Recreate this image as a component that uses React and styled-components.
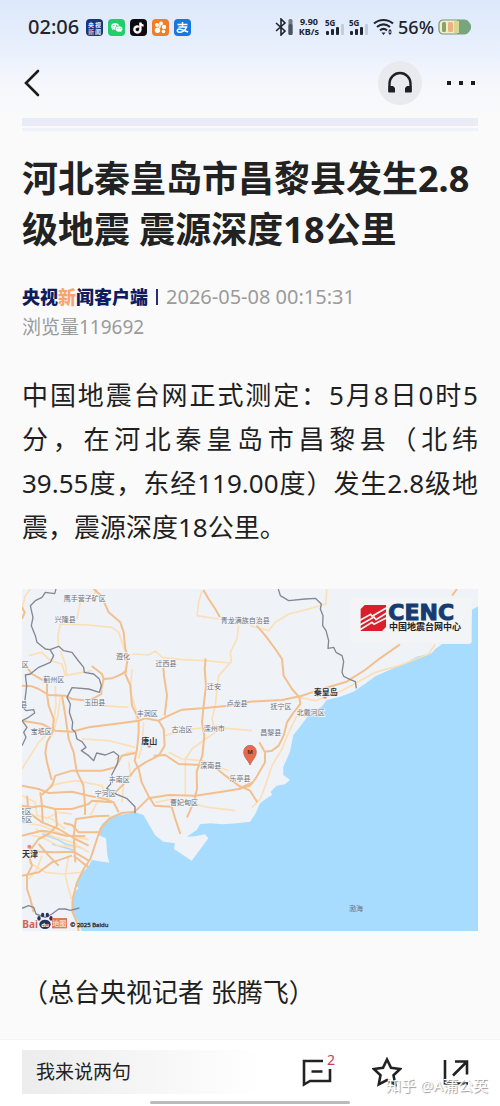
import React from "react";
import styled, { createGlobalStyle } from "styled-components";

const GlobalStyle = createGlobalStyle`
  * {
    box-sizing: border-box;
  }
  body {
    margin: 0;
    background: #fafafa;
    color: #1f1f1f;
    font-family: "Noto Sans", "Noto Sans CJK SC", sans-serif;
  }
  h1, p {
    margin: 0;
  }
  button {
    border: 0;
    padding: 0;
    background: none;
    color: inherit;
    font: inherit;
  }
  svg {
    display: block;
  }
`;

const Page = styled.div`
  display: flex;
  flex-direction: column;
  min-height: 100vh;
  background: linear-gradient(#dce8fa 0, #e9f0fd 50px, #f7f8fc 90px, #fafafa 120px);
`;

const StatusBar = styled.div`
  display: flex;
  align-items: center;
  justify-content: space-between;
  height: 54px;
  padding: 0 28px;
  color: #20242c;
`;

const StatusGroup = styled.div`
  display: flex;
  align-items: center;
  gap: ${(props) => (props.$tight ? "4px" : "5px")};
`;

const Clock = styled.time`
  margin-right: 2px;
  font-size: 20px;
  line-height: 20px;
  font-weight: 500;
`;

const AppIcon = styled.svg`
  width: 17px;
  height: 17px;
  border-radius: 4px;
  background: ${(props) => props.$bg};
`;

const NetSpeed = styled.div`
  margin: 0 2px;
  font-size: 9px;
  line-height: 10px;
  font-weight: 700;
  text-align: center;
`;

const Percent = styled.span`
  font-size: 18px;
  line-height: 20px;
  font-weight: 500;
`;

const NavBar = styled.nav`
  display: flex;
  align-items: center;
  justify-content: space-between;
  height: 58px;
  padding: 0 22px;
`;

const NavActions = styled.div`
  display: flex;
  align-items: center;
  gap: 22px;
`;

const RoundButton = styled.button`
  display: grid;
  place-items: center;
  width: 44px;
  height: 44px;
  border-radius: 50%;
  background: #e8eaed;
`;

const Article = styled.main`
  flex: 1;
  padding: 6px 22px 23px;
`;

const Stripe = styled.div`
  height: ${(props) => (props.$thin ? "3px" : "8px")};
  margin-bottom: 2px;
  background: ${(props) => (props.$thin ? "#f0f2fa" : "#e9ecf6")};
`;

const Title = styled.h1`
  margin-top: 22px;
  font-size: 36px;
  line-height: 51px;
  font-weight: 700;
  color: #222;
`;

const Meta = styled.div`
  display: flex;
  flex-wrap: wrap;
  align-items: center;
  margin-top: 27px;
  color: #9b9b9b;
  line-height: 30px;
`;

const Source = styled.span`
  padding-right: 8px;
  font-size: 18px;
  font-weight: 900;
  color: #101b62;
  em {
    color: #f3a673;
    font-style: normal;
  }
`;

const Published = styled.time`
  display: flex;
  align-items: center;
  gap: 8px;
  font-size: 20px;
  &::before {
    content: "";
    width: 2px;
    height: 16px;
    background: #26306f;
  }
`;

const Views = styled.span`
  flex-basis: 100%;
  font-size: 19px;
`;

const Paragraph = styled.p`
  margin-top: ${(props) => props.$top};
  font-size: 26px;
  line-height: 44px;
  text-align: justify;
`;

const MapFigure = styled.figure`
  margin: 40px 0 0;
  svg {
    width: 100%;
    height: auto;
  }
`;

const Footer = styled.footer`
  position: relative;
  padding: 10px 0 2px;
  border-top: 1px solid #f3f3f3;
  background: #fff;
`;

const FooterRow = styled.div`
  display: flex;
  align-items: center;
  gap: 40px;
  padding: 0 28px 0 22px;
`;

const CommentInput = styled.input`
  flex: 1;
  min-width: 0;
  height: 44px;
  padding: 0 14px;
  border: 0;
  border-radius: 0;
  outline: 0;
  background: linear-gradient(90deg, #ececec, #fff);
  font-family: inherit;
  font-size: 19px;
  &::placeholder {
    color: #222;
    opacity: 1;
  }
`;

const ToolButton = styled.button`
  position: relative;
  width: 30px;
  height: 30px;
`;

const Badge = styled.span`
  position: absolute;
  top: -5px;
  right: -3px;
  color: #c8375f;
  font-size: 14px;
  line-height: 16px;
`;

const HomeIndicator = styled.div`
  width: 200px;
  height: 3px;
  margin: 7px auto 0;
  border-radius: 2px;
  background: #bbb;
`;

const Watermark = styled.span`
  position: absolute;
  right: 12px;
  bottom: 10px;
  color: #fff;
  font-size: 15px;
  line-height: 22px;
  text-shadow: 1px 1px 1px #999;
  pointer-events: none;
`;

const MapLabel = styled.text`
  fill: ${(props) => (props.$city ? "#333" : "#6d7079")};
  font-size: ${(props) => (props.$city ? "24px" : "21px")};
  font-weight: ${(props) => (props.$city ? 700 : 400)};
  text-anchor: middle;
  dominant-baseline: central;
  paint-order: stroke;
  stroke: #f4f6f9;
  stroke-width: ${(props) => (props.$sea ? 0 : "4px")};
`;

const coast =
  "M0 0H1368V52L1350 62L1345 165H1260L1240 180L1229 193L1184 203L1150 222L1114 238L1060 262L1024 288L994 308L954 323L914 333L899 353L864 373L834 413L814 438L804 488L784 533V558L804 573L789 586L764 590L746 608L750 618L734 628L714 643L700 675L684 698L644 703L604 706L564 703L534 706L524 723L494 743L520 742L549 736L559 748L509 815L456 780L459 763L424 758L399 738L380 705L364 678L339 670L269 683L240 705L229 738L252 748L256 798L262 821L209 813L199 833L174 858L162 890L170 898L159 908L149 938V968L169 998L179 1026H0Z";

const borders = [
  "M102 0L98 14L70 10L60 25L40 35L25 50L33 85L28 110L40 140L45 160L70 180L84 182L110 172L125 185L150 190L165 210L185 235L187 250L215 255L232 270L238 290L232 310L200 300L150 296L135 325L145 345L142 370L152 400L150 420L160 430L165 450L180 458L192 475L178 485L200 500L215 515L224 492L250 498L275 488L290 500L286 525L269 558L266 585L254 598L284 616L314 628L339 653V673",
  "M84 182L95 200L85 220L50 235L25 255L10 258L14 290L8 340L0 350",
  "M0 352L12 365L35 362L38 372L20 385L0 395L15 415L5 430L12 445L0 470",
  "M769 0L775 20L800 35L850 30L880 28L898 45L895 60L903 80L902 110L912 125L920 155L918 178L935 175L942 190L960 200L965 218L960 250L965 262L985 272L1000 278L1003 298",
  "M0 958L20 950L35 955L42 975L70 985L90 975L110 960L130 960L145 964L172 957",
];

const minorRoads = [
  "M109 170L108 140L115 105L200 108L270 115L290 130L310 190",
  "M330 195L380 198L400 186L420 205L480 212L550 215L625 222",
  "M540 5L530 40L525 80L590 90",
  "M650 110L645 150L625 190L628 218L590 260L585 300L580 350L570 390L580 430L550 450L510 480L490 510V615",
  "M684 110L740 125L760 100L800 75L860 60L912 45L914 0",
  "M830 345L825 380L800 430L780 480L750 530L730 590L715 630L690 655",
  "M832 325L880 335L960 305L1060 250L1130 230L1220 195L1240 165",
  "M20 200L60 190L85 215L120 225L130 260L180 250L210 245",
  "M115 185L130 225L135 260",
  "M100 290L102 350L95 400",
  "M115 325L108 380L95 425",
  "M225 0L210 30L175 40L165 90",
  "M195 335L240 350L320 355",
  "M180 450L260 455L340 475",
  "M430 440L500 420L580 415L690 425",
  "M440 490L480 510L540 515L620 545",
  "M0 540L50 460L80 430",
  "M400 640L450 630L560 655L640 665",
  "M330 240L325 310L345 370L342 400",
  "M365 400L360 470L350 510",
  "M280 510L320 490L345 490",
  "M320 520L325 555L305 580L300 640",
  "M260 640L240 590L160 575L80 590",
  "M205 680L225 640L280 620",
  "M0 620L40 640L45 680L90 690L130 720",
  "M70 690L110 670L150 675",
  "M0 700L60 710L120 735L200 752",
  "M40 720L100 745L150 760L200 790",
  "M30 740L60 745L110 770L170 775",
  "M140 800L130 860L148 930",
  "M20 820L70 850L120 855L180 850",
  "M60 800L45 840L20 870",
  "M0 60L10 20L25 0",
];

const majorRoads = [
  "M215 0L238 20L260 70L295 100L305 130L310 180L318 205L312 240L310 255L325 290L330 350L350 390",
  "M209 231L240 255L245 270L270 268L300 255L312 245",
  "M245 270L238 300L238 315L220 325L200 335L150 330L130 320L80 318L50 300L30 292L0 290",
  "M15 235L30 255L60 272L80 268",
  "M0 395L60 405L100 425L150 428L200 415L300 402L350 395L370 388L410 395L440 380L480 362L540 358L620 350L684 338L780 333L834 322L900 300L974 278L1029 243L1074 208L1134 166",
  "M424 233L426 260L435 320L428 380",
  "M551 208L548 240L552 290L545 350L540 400L547 440L541 500L524 548L525 600L515 640L495 685",
  "M350 395L350 430L345 480L338 515L350 540L359 580L379 620L398 650L449 653L460 690L475 735",
  "M410 395L425 420L428 470L410 500L370 520L340 540L310 580L280 610",
  "M75 280L75 315L80 350L95 390L92 430L75 460L70 490L75 520L89 573",
  "M120 320L130 380L140 450L155 490L164 548L184 588L189 648V678",
  "M0 590L50 600L80 612L150 608L200 620L250 630L275 640L290 670",
  "M59 618L90 590L100 560L150 545L240 545L280 535L300 500L340 492",
  "M339 668L379 628L440 618L520 620L600 608L650 600L690 580",
  "M395 500L430 498L470 525L540 528L580 535L610 560L650 590L684 605L706 640",
  "M339 668L300 672L262 688L235 720L225 750L205 810L185 840L165 880L152 930V970L165 1000L170 1026",
  "M160 820L155 740L162 690L220 682L262 680",
  "M155 800L180 820L200 835",
  "M0 650L30 655L60 650L100 660L150 660L200 645L210 635L270 640",
  "M15 620L20 670L60 700L110 720L160 750L200 770",
  "M55 610L60 650L62 700",
  "M100 660L105 710L80 735L50 750L20 790",
  "M125 702L150 708L170 730L240 730",
  "M0 740L20 735L60 725L90 730L130 740L190 742",
  "M0 788H60L100 790L155 788L200 815",
  "M50 765L80 800L110 830",
  "M20 800L30 830L15 860L15 900L25 930L35 970",
  "M0 860L50 850L90 820L150 800",
  "M704 110L730 140L760 180L780 210L785 260L810 300L832 325",
  "M832 325L835 345L815 370L795 400L785 440L770 470L750 485L728 488L712 460",
  "M729 490V520L700 570L684 590L650 600",
  "M544 3L560 30L580 60L594 85",
  "M0 90L8 70L0 55",
  "M1290 20L1305 0",
];

const labels = [
  ["鹰手营子矿区", 188, 27],
  ["兴隆县", 130, 90],
  ["青龙满族自治县", 670, 95],
  ["遵化", 303, 201],
  ["迁西县", 432, 223],
  ["蓟州区", 95, 270],
  ["迁安", 576, 293],
  ["玉田县", 218, 340],
  ["卢龙县", 645, 344],
  ["丰润区", 376, 372],
  ["抚宁区", 777, 352],
  ["北戴河区", 866, 371],
  ["宝坻区", 58, 427],
  ["古冶区", 480, 421],
  ["滦州市", 577, 417],
  ["昌黎县", 746, 430],
  ["滦南县", 566, 530],
  ["丰南区", 292, 572],
  ["宁河区", 250, 613],
  ["乐亭县", 654, 568],
  ["曹妃甸区", 486, 641],
  ["区", 10, 225],
  ["县", 5, 346],
  ["辰区", 8, 666],
  ["桥区", 10, 692],
  ["秦皇岛", 911, 306, true],
  ["唐山", 382, 453, true],
  ["天津", 24, 793, true],
];

function SignalIcon() {
  return (
    <svg width="20" height="20" viewBox="0 0 20 20" aria-hidden="true">
      <text x="0" y="9" fontSize="8" fontWeight="700" fill="#20242c">
        5G
      </text>
      <g fill="#20242c">
        <rect x="1" y="14" width="3" height="4" rx="1" />
        <rect x="6" y="12" width="3" height="6" rx="1" />
        <rect x="11" y="10" width="3" height="8" rx="1" />
        <rect x="16" y="7" width="3" height="11" rx="1" fill="#c4cddb" />
      </g>
    </svg>
  );
}

function Status() {
  return (
    <StatusBar>
      <StatusGroup>
        <Clock>02:06</Clock>
        <AppIcon $bg="#18347c" viewBox="0 0 17 17">
          <g fontSize="6" fontWeight="700" fill="#e6edff">
            <text x="2" y="8">央</text>
            <text x="9" y="8">视</text>
            <text x="2" y="15" fill="#efb8a0">新</text>
            <text x="9" y="15">闻</text>
          </g>
        </AppIcon>
        <AppIcon $bg="#1fcf6c" viewBox="0 0 17 17">
          <path d="M7.2 4C4.800 4 3 5.500 3 7.400c0 1 .6 2 1.500 2.600L4.200 11.300l1.600-.8 1.400.2C7 8 9 6.400 11.300 6.500 10.800 5 9.200 4 7.200 4Z" fill="#e9fff1" />
          <path d="M11 7.200c-2 0-3.500 1.200-3.500 2.800s1.500 2.800 3.500 2.800l1.200-.2 1.300.7-.3-1.200c.8-.5 1.300-1.300 1.300-2.100 0-1.600-1.500-2.800-3.500-2.800Z" fill="#fff" />
          <g fill="#1fcf6c">
            <circle cx="5.800" cy="6.500" r=".6" />
            <circle cx="8.500" cy="6.500" r=".6" />
            <circle cx="9.900" cy="9.300" r=".5" />
            <circle cx="12.200" cy="9.300" r=".5" />
          </g>
        </AppIcon>
        <AppIcon $bg="#0c0a10" viewBox="0 0 17 17" fill="none" strokeWidth="2">
          <path d="M8.300 7.500a3 3 0 1 0 1.800 2.700V3.500c.2 1.700 1.300 2.700 3 2.800" stroke="#27d8da" />
          <path d="M9 8a3 3 0 1 0 1.800 2.700V4c.2 1.700 1.300 2.700 3 2.800" stroke="#ee355b" />
          <path d="M8.700 7.800a3 3 0 1 0 1.700 2.600V3.700c.3 1.700 1.400 2.700 3 2.800" stroke="#fff" />
        </AppIcon>
        <AppIcon $bg="#f37d23" viewBox="0 0 17 17" fill="#fff">
          <circle cx="9" cy="4.500" r="2" />
          <circle cx="5" cy="6" r="2" />
          <circle cx="12" cy="8" r="2.200" />
          <circle cx="5.500" cy="11.300" r="2.700" />
          <circle cx="11.500" cy="12.500" r="1.800" />
          <path d="M8 5L6 10L9 8Z" />
        </AppIcon>
        <AppIcon $bg="#1678dc" viewBox="0 0 17 17">
          <path d="M3.500 5.500h10M8.500 3v5M4.500 8h8c-1 2.500-3 4.500-5 5-2.500.6-4.500-.2-4.200-1.700.4-2 4-1.500 10.700 1.700" fill="none" stroke="#fff" strokeWidth="1.500" />
        </AppIcon>
      </StatusGroup>
      <StatusGroup $tight>
        <svg width="18" height="18" viewBox="0 0 18 18" fill="none" stroke="#20242c" strokeWidth="1.600">
          <path d="M1 5l9 8-4 4V1l4 4-9 8" />
          <rect x="13.500" y="1" width="4" height="16" rx="1.500" fill="#727985" stroke="none" />
          <rect x="13.500" y="6" width="4" height="11" rx="1.500" fill="#4d535e" stroke="none" />
        </svg>
        <NetSpeed>
          9.90
          <br />
          KB/s
        </NetSpeed>
        <SignalIcon />
        <SignalIcon />
        <svg width="21" height="18" viewBox="0 0 21 18" fill="none" stroke="#20242c" strokeWidth="2.200">
          <path d="M1 5.500C6.500.8 14.500.8 20 5.500M4 9c4-3.300 9-3.300 13 0M7 12.400c2.200-1.800 4.800-1.800 7 0" />
          <path d="M8.500 14.500h4l-2 2.500ZM17 11l2 2.500h-4ZM17 17l-2-2.500h4Z" fill="#20242c" stroke="none" />
        </svg>
        <Percent>56%</Percent>
        <svg width="34" height="16" viewBox="0 0 34 16">
          <rect x="1" y="1" width="29" height="14" rx="4" fill="#f3ecd2" stroke="#6f9d78" strokeWidth="1.200" />
          <path d="M19 1h8q3 0 4 2l2 3v4l-2 3q-1 2-4 2h-8Z" fill="#77a67e" />
          <rect x="4" y="3" width="4" height="10" rx="1.500" fill="#87a65f" />
          <rect x="10" y="3" width="5" height="10" rx="1.500" fill="#eab27e" />
          <rect x="16" y="2" width="5" height="12" fill="#d8d692" />
        </svg>
      </StatusGroup>
    </StatusBar>
  );
}

function EpicenterMap() {
  return (
    <MapFigure>
      <svg viewBox="0 0 1368 1026" role="img" aria-label="震中位置地图">
        <rect width="1368" height="1026" fill="#a8dcfe" />
        <path d={coast} fill="#eff3f8" />
        <g fill="none" strokeLinejoin="round">
          <path d="M60 735l50 18 20 12 50 12M90 765l70 20" stroke="#b2dcf5" strokeWidth="5" />
          <g stroke="#fbdfb6" strokeWidth="5">
            {minorRoads.map((d) => (
              <path key={d} d={d} />
            ))}
          </g>
          <g stroke="#f3bf8d" strokeWidth="6">
            {majorRoads.map((d) => (
              <path key={d} d={d} />
            ))}
          </g>
          <g stroke="#858894" strokeWidth="4">
            {borders.map((d) => (
              <path key={d} d={d} />
            ))}
          </g>
        </g>
        <g fill="#e58a80">
          <circle cx="909" cy="323" r="6" />
          <circle cx="382" cy="470" r="6" />
          <circle cx="22" cy="773" r="6" />
        </g>
        {labels.map(([name, x, y, city]) => (
          <MapLabel key={name + x} x={x} y={y} $city={city}>
            {name}
          </MapLabel>
        ))}
        <MapLabel x="1002" y="957" $sea>
          渤海
        </MapLabel>

        <path d="M684 528C678 512 665 506 665 488a19 19 0 0 1 38 0C703 506 690 512 684 528Z" fill="#e66b4d" stroke="#b9553f" strokeWidth="2" />
        <text x="684" y="495" fontSize="18" fontWeight="700" textAnchor="middle" fill="#5b2419">
          M
        </text>

        <rect x="985" y="24" width="364" height="137" fill="#f3f4f6" />
        <path d="M1028 48h64v66l-12 12h-64V60Z" fill="#d9202a" />
        <g stroke="#f3f4f6" strokeWidth="5" fill="none">
          <path d="M1014 94L1046 76L1050 82L1094 56" />
          <path d="M1014 108L1056 84L1062 92L1094 72" />
          <path d="M1014 122L1050 100L1056 106L1094 86" />
        </g>
        <text x="1099" y="93" fontSize="66" fontWeight="700" fontFamily="DejaVu Sans, sans-serif" fill="#173b70" stroke="#173b70" strokeWidth="3">
          CENC
        </text>
        <text x="1101" y="123" fontSize="27" fontWeight="700" fill="#222">
          中国地震台网中心
        </text>

        <text x="1" y="1017" fontSize="30" fontWeight="700" fill="#cf6550">
          Bai
        </text>
        <g fill="#26345f">
          <ellipse cx="69" cy="1006" rx="17" ry="14" />
          <ellipse cx="51" cy="988" rx="5" ry="7" />
          <ellipse cx="62" cy="978" rx="5" ry="7" />
          <ellipse cx="76" cy="978" rx="5" ry="7" />
          <ellipse cx="87" cy="988" rx="5" ry="7" />
        </g>
        <text x="69" y="1013" fontSize="18" fontWeight="700" textAnchor="middle" fill="#fff">
          du
        </text>
        <rect x="90" y="987" width="45" height="31" fill="#df7a57" />
        <text x="91" y="1011" fontSize="21" fontWeight="700" fill="#f5d9cb">
          地图
        </text>
        <text x="145" y="1014" fontSize="18" fill="#333" stroke="#333" strokeWidth="1">
          © 2025 Baidu
        </text>
      </svg>
    </MapFigure>
  );
}

function App() {
  return (
    <Page>
      <GlobalStyle />
      <Status />
      <NavBar>
        <button type="button" aria-label="返回">
          <svg width="20" height="28" viewBox="0 0 20 28" fill="none" stroke="#1c1c1c" strokeWidth="2.600" strokeLinecap="round">
            <path d="M16 2L4 14L16 26" />
          </svg>
        </button>
        <NavActions>
          <RoundButton type="button" aria-label="收听">
            <svg width="26" height="24" viewBox="0 0 26 24">
              <path d="M2.500 21V12.500a10.500 10.500 0 0 1 21 0V21" fill="none" stroke="#1d2026" strokeWidth="2.400" />
              <path d="M1.500 15h4.500l2 2v4.500H1.500ZM24.500 15H20l-2 2v4.500h6.500Z" fill="#1d2026" />
            </svg>
          </RoundButton>
          <button type="button" aria-label="更多">
            <svg width="34" height="24" viewBox="0 0 34 24" fill="#1d1d1d">
              <rect x="3" y="10" width="4" height="4" />
              <rect x="15" y="10" width="4" height="4" />
              <rect x="27" y="10" width="4" height="4" />
            </svg>
          </button>
        </NavActions>
      </NavBar>
      <Article>
        <Stripe />
        <Stripe $thin />
        <Title>河北秦皇岛市昌黎县发生2.8级地震 震源深度18公里</Title>
        <Meta>
          <Source>
            央视<em>新</em>闻客户端
          </Source>
          <Published>2026-05-08 00:15:31</Published>
          <Views>浏览量119692</Views>
        </Meta>
        <Paragraph $top="31px">
          中国地震台网正式测定：5月8日0时5分，在河北秦皇岛市昌黎县（北纬39.55度，东经119.00度）发生2.8级地震，震源深度18公里。
        </Paragraph>
        <EpicenterMap />
        <Paragraph $top="39px">（总台央视记者 张腾飞）</Paragraph>
      </Article>
      <Footer>
        <FooterRow>
          <CommentInput type="text" aria-label="评论" placeholder="我来说两句" />
          <ToolButton type="button" aria-label="查看评论">
            <svg width="30" height="30" viewBox="0 0 30 30" fill="none" stroke="#222" strokeWidth="2.600">
              <path d="M21 4H2v23.500l6-3.500h20V12M9.500 14.500h11" />
            </svg>
            <Badge>2</Badge>
          </ToolButton>
          <ToolButton type="button" aria-label="收藏">
            <svg width="30" height="30" viewBox="0 0 30 30" fill="none" stroke="#222" strokeWidth="2.600">
              <path d="M15 2.500l4 8.300 9.200 1.200-6.700 6.300 1.700 9L15 23l-8.200 4.300 1.700-9L1.800 12l9.200-1.200Z" />
            </svg>
          </ToolButton>
          <ToolButton type="button" aria-label="分享">
            <svg width="30" height="30" viewBox="0 0 30 30" fill="none" stroke="#222" strokeWidth="2.600">
              <path d="M3 3v23.500h23M13 4.500h12v13M25 4.500L11 18.500" />
            </svg>
          </ToolButton>
        </FooterRow>
        <Watermark>知乎 @A蒲公英</Watermark>
        <HomeIndicator />
      </Footer>
    </Page>
  );
}

export default App;
